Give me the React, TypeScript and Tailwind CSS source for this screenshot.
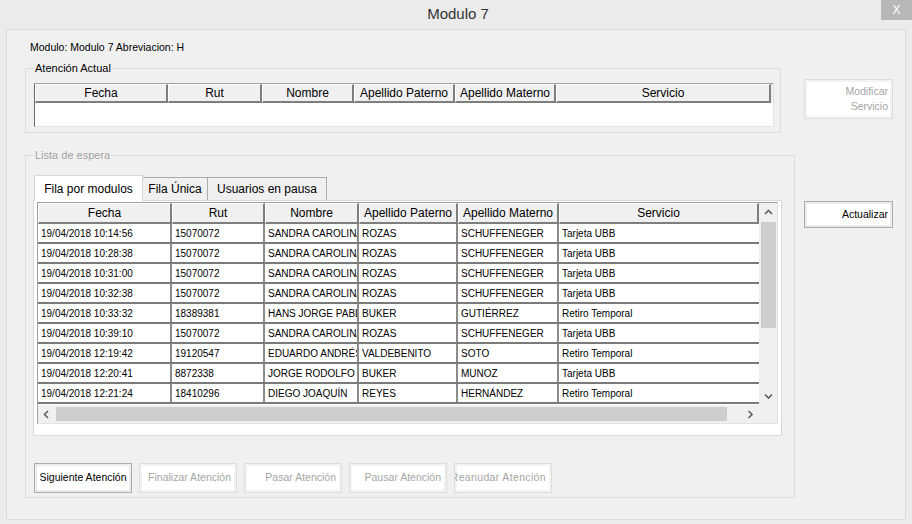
import React from "react";
import clsx from "clsx";

type Row = [string, string, string, string, string, string];

const headers = ["Fecha", "Rut", "Nombre", "Apellido Paterno", "Apellido Materno", "Servicio"];

// column widths of the waiting-list grid
const listCols = ["w-[134px]", "w-[93px]", "w-[94px]", "w-[99px]", "w-[101px]", "w-[200px]"];
// column widths of the "Atención Actual" grid
const currentCols = ["w-[133px]", "w-[94px]", "w-[92px]", "w-[101px]", "w-[101px]", "w-[215px]"];

const rows: Row[] = [
  ["19/04/2018 10:14:56", "15070072", "SANDRA CAROLINA", "ROZAS", "SCHUFFENEGER", "Tarjeta UBB"],
  ["19/04/2018 10:28:38", "15070072", "SANDRA CAROLINA", "ROZAS", "SCHUFFENEGER", "Tarjeta UBB"],
  ["19/04/2018 10:31:00", "15070072", "SANDRA CAROLINA", "ROZAS", "SCHUFFENEGER", "Tarjeta UBB"],
  ["19/04/2018 10:32:38", "15070072", "SANDRA CAROLINA", "ROZAS", "SCHUFFENEGER", "Tarjeta UBB"],
  ["19/04/2018 10:33:32", "18389381", "HANS JORGE PABLO", "BUKER", "GUTIÉRREZ", "Retiro Temporal"],
  ["19/04/2018 10:39:10", "15070072", "SANDRA CAROLINA", "ROZAS", "SCHUFFENEGER", "Tarjeta UBB"],
  ["19/04/2018 12:19:42", "19120547", "EDUARDO ANDRÉS", "VALDEBENITO", "SOTO", "Retiro Temporal"],
  ["19/04/2018 12:20:41", "8872338", "JORGE RODOLFO", "BUKER", "MUNOZ", "Tarjeta UBB"],
  ["19/04/2018 12:21:24", "18410296", "DIEGO JOAQUÍN", "REYES", "HERNÁNDEZ", "Retiro Temporal"],
];

function HeaderCell({ label, width }: { label: string; width: string }) {
  return (
    <div
      className={clsx(
        width,
        "h-full shrink-0 flex items-center justify-center overflow-hidden whitespace-nowrap bg-[#f0f0f0] text-[12px] text-black",
        "border-t border-l border-t-white border-l-white border-r-2 border-b-2 border-r-[#7e7e7e] border-b-[#7e7e7e]"
      )}
    >
      {label}
    </div>
  );
}

function Chevron({ dir }: { dir: "up" | "down" | "left" | "right" }) {
  const d = {
    up: "M1 5 L4.5 1.5 L8 5",
    down: "M1 1.5 L4.5 5 L8 1.5",
    left: "M5 1 L1.5 4.5 L5 8",
    right: "M1.5 1 L5 4.5 L1.5 8",
  }[dir];
  const vertical = dir === "up" || dir === "down";
  return (
    <svg width={vertical ? 9 : 7} height={vertical ? 7 : 9} viewBox={vertical ? "0 0 9 7" : "0 0 7 9"}>
      <path d={d} stroke="#606060" strokeWidth="1.6" fill="none" />
    </svg>
  );
}

function WinButton({
  children,
  enabled = false,
  className,
}: {
  children: React.ReactNode;
  enabled?: boolean;
  className?: string;
}) {
  return (
    <div
      className={clsx(
        "flex items-center overflow-hidden whitespace-nowrap bg-white text-[10.5px] border",
        enabled
          ? "border-[#adadad] text-black shadow-[inset_0_0_0_2px_#ebebeb]"
          : "border-[#dcdcdc] text-[#a6a6a6] shadow-[inset_0_0_0_2px_#f3f3f3]",
        className
      )}
    >
      {children}
    </div>
  );
}

function CurrentGrid() {
  return (
    <div className="w-[740px] flex flex-col border border-l-[#696969] border-t-[#a0a0a0] border-r-[#e3e3e3] border-b-[#e3e3e3]">
      <div className="flex h-[19px]">
        {headers.map((h, i) => (
          <HeaderCell key={h} label={h} width={currentCols[i]} />
        ))}
        <div className="flex-1 bg-[#f0f0f0]" />
      </div>
      <div className="h-[23px] bg-white" />
    </div>
  );
}

function WaitingGrid() {
  return (
    <div className="w-[741px] flex flex-col border border-l-[#a0a0a0] border-t-[#a0a0a0] border-r-[#e3e3e3] border-b-[#e3e3e3] bg-white">
      <div className="flex h-[202px]">
        <div className="w-[721px] flex flex-col overflow-hidden">
          <div className="flex h-[21px] shrink-0">
            {headers.map((h, i) => (
              <HeaderCell key={h} label={h} width={listCols[i]} />
            ))}
          </div>
          {rows.map((r, ri) => (
            <div key={ri} className="flex h-[20px] shrink-0 border-b-2 border-b-[#7a7a7a] bg-white">
              {r.map((c, ci) => (
                <div
                  key={ci}
                  className={clsx(
                    listCols[ci],
                    "h-full shrink-0 flex items-center overflow-hidden whitespace-nowrap pl-[3px] text-[10px] text-black",
                    ci < 5 && "border-r-2 border-r-[#8c8c8c]"
                  )}
                >
                  {c}
                </div>
              ))}
            </div>
          ))}
        </div>
        {/* vertical scrollbar */}
        <div className="w-[18px] flex flex-col items-center bg-[#f0f0f0]">
          <div className="h-[19px] flex items-center justify-center">
            <Chevron dir="up" />
          </div>
          <div className="w-[15px] h-[106px] bg-[#cdcdcd]" />
          <div className="flex-1" />
          <div className="h-[18px] flex items-center justify-center">
            <Chevron dir="down" />
          </div>
        </div>
      </div>
      <div className="flex h-[18px]">
        {/* horizontal scrollbar */}
        <div className="w-[721px] flex items-center bg-[#f0f0f0]">
          <div className="w-[17px] h-full flex items-center justify-center">
            <Chevron dir="left" />
          </div>
          <div className="ml-[1px] w-[671px] h-[14px] bg-[#cdcdcd]" />
          <div className="flex-1" />
          <div className="w-[17px] h-full flex items-center justify-center">
            <Chevron dir="right" />
          </div>
        </div>
        <div className="w-[18px] bg-[#f0f0f0]" />
      </div>
    </div>
  );
}

export default function App() {
  const tabs = ["Fila Única", "Usuarios en pausa"];

  return (
    <div className="w-[912px] h-[524px] bg-[#ebebeb] font-['Liberation_Sans',Arial,sans-serif] text-black overflow-hidden">
      {/* title bar */}
      <div className="relative h-[29px] flex items-center justify-center text-[15px] text-[#333333]">
        <span className="ml-[4px]">Modulo 7</span>
        <div className="absolute right-0 top-0 w-[31px] h-[20px] bg-[#b7b7b7] flex items-center justify-center text-white text-[12px]">
          X
        </div>
      </div>

      <div className="mx-[6px] h-[491px] border border-[#dadada] bg-[#f0f0f0] pl-[18px] pt-[11px]">
        <div className="ml-[5px] text-[10.5px] leading-[13px]">Modulo: Modulo 7 Abreviacion: H</div>

        {/* Atención Actual */}
        <div className="mt-[8px] flex items-start">
          <fieldset className="w-[756px] border border-[#dcdcdc] pl-[8px] pb-[5px]">
            <legend className="px-[1px] text-[11px] leading-[13px]">Atención Actual</legend>
            <div className="mt-[8px]">
              <CurrentGrid />
            </div>
          </fieldset>
          <WinButton className="ml-[23px] mt-[17px] w-[89px] h-[40px] flex-col !items-end justify-center pr-[4px] leading-[15px]">
            <span>Modificar</span>
            <span>Servicio</span>
          </WinButton>
        </div>

        {/* Lista de espera */}
        <div className="mt-[16px] flex items-start">
          <fieldset className="w-[770px] border border-[#dcdcdc] pl-[7px] pb-[4px]">
            <legend className="ml-[1px] px-[1px] text-[11px] leading-[13px] text-[#a3a3a3]">Lista de espera</legend>
            <div className="mt-[13px] h-[25px] flex items-end pl-[1px]">
              <div className="relative z-10 -mb-[1px] h-[26px] w-[109px] flex items-center justify-center pt-[1px] border border-b-0 border-[#d9d9d9] bg-white text-[12px]">
                Fila por modulos
              </div>
              {tabs.map((t) => (
                <div
                  key={t}
                  className={clsx(
                    "h-[23px] flex items-center justify-center border border-b-0 border-[#acacac] bg-[#f0f0f0] text-[12px]",
                    t === "Fila Única" ? "w-[65px] border-l-0" : "w-[119px] border-l-0"
                  )}
                >
                  {t}
                </div>
              ))}
            </div>
            <div className="w-[749px] h-[236px] border border-[#d9d9d9] bg-white px-[3px] pt-[1px]">
              <WaitingGrid />
            </div>
            <div className="mt-[27px] ml-[1px] flex gap-[7px]">
              <WinButton enabled className="w-[98px] h-[30px] justify-center">
                Siguiente Atención
              </WinButton>
              {["Finalizar Atención", "Pasar Atención", "Pausar Atención"].map((b) => (
                <WinButton key={b} className="w-[98px] h-[30px] justify-end pr-[5px]">
                  <span>{b}</span>
                </WinButton>
              ))}
              <WinButton className="w-[98px] h-[30px] justify-end pr-[5px]">
                <span className="tracking-[0.35px]">Reanudar Atención</span>
              </WinButton>
            </div>
          </fieldset>
          <WinButton enabled className="ml-[9px] mt-[52px] w-[89px] h-[27px] justify-end pr-[4px]">
            Actualizar
          </WinButton>
        </div>
      </div>
    </div>
  );
}
